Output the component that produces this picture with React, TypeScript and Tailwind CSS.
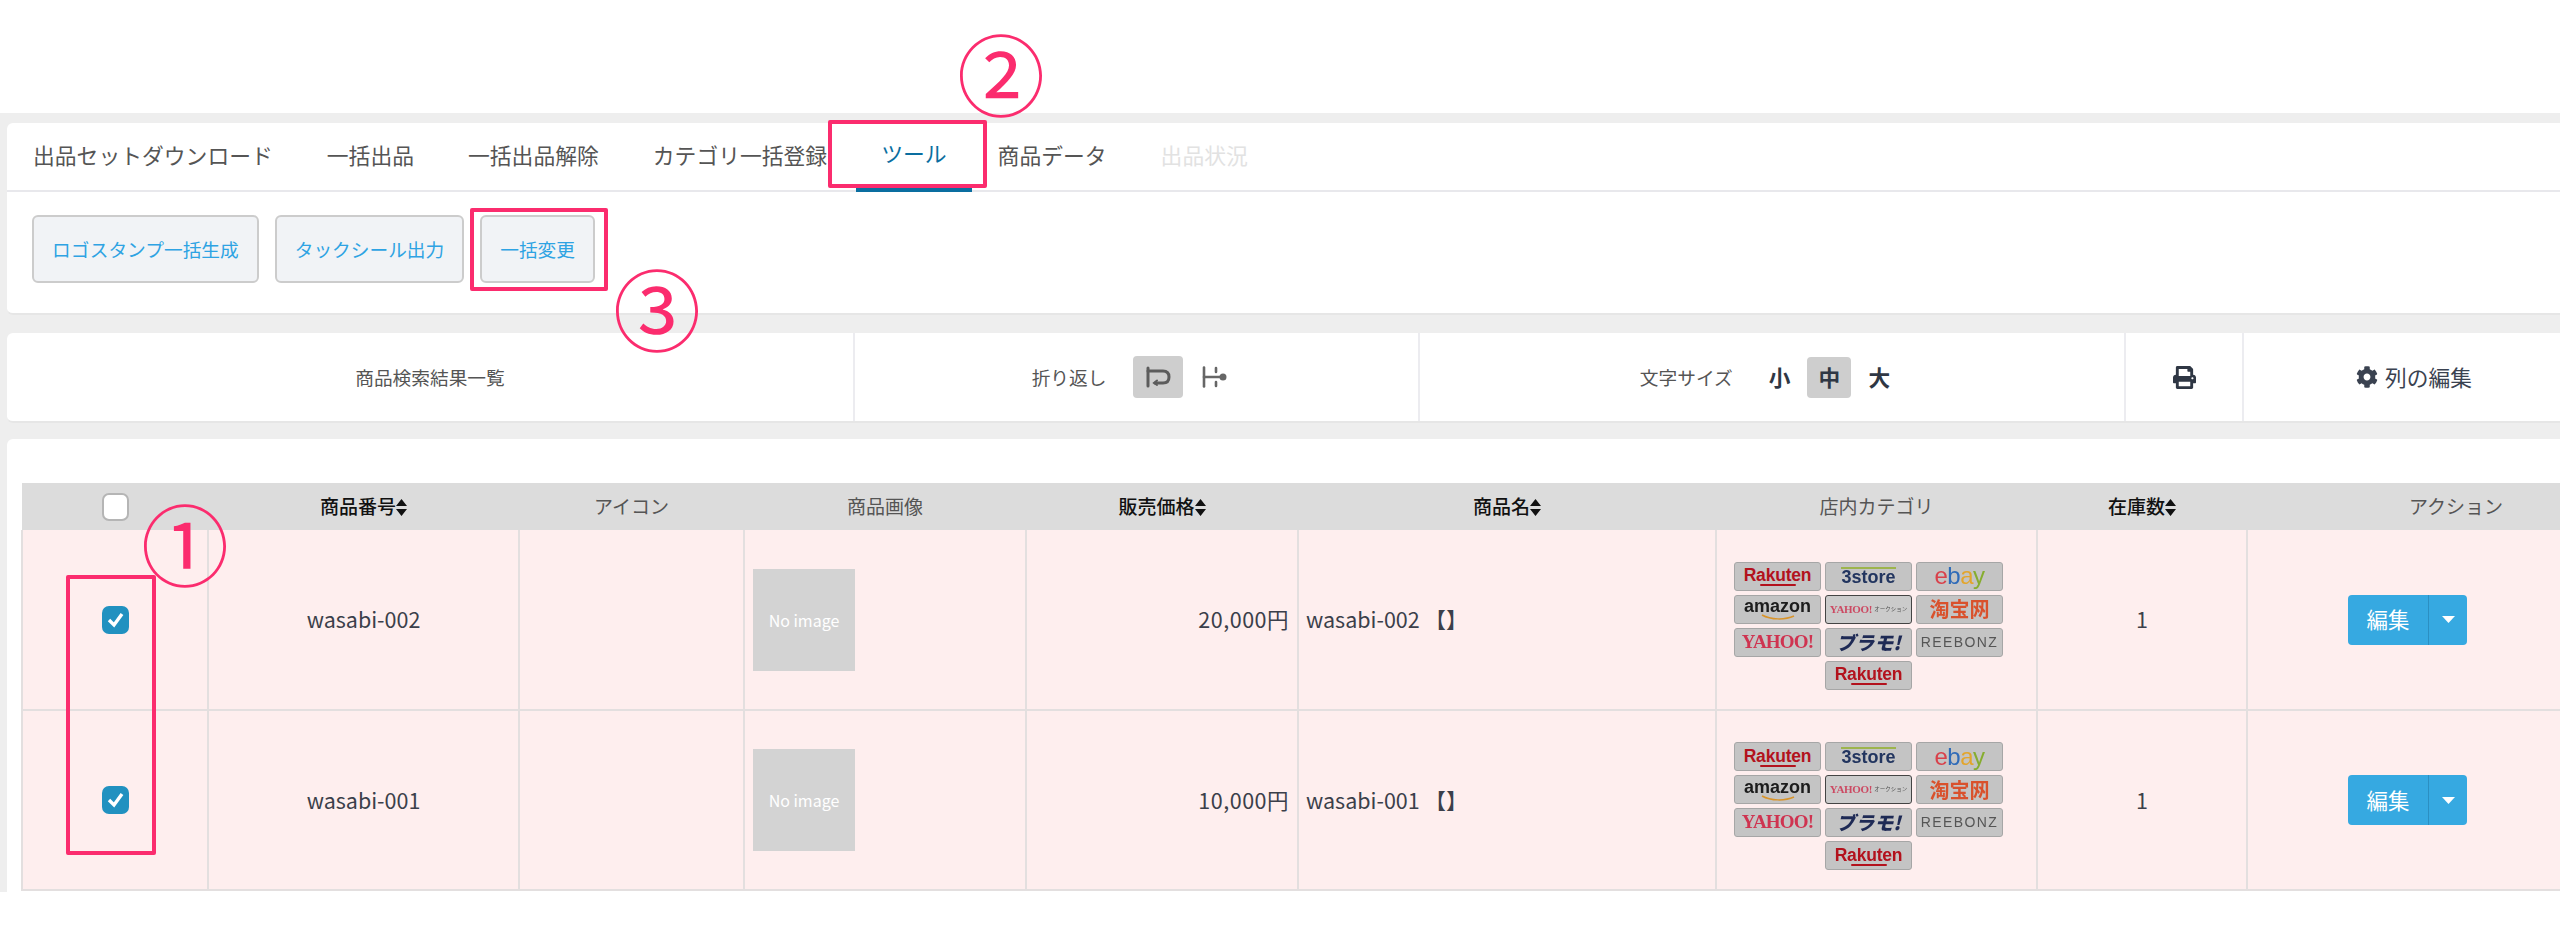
import type { ReactNode } from 'react';
import { FaCog, FaPrint } from 'react-icons/fa';

const FONT = "font-['Noto_Sans_CJK_JP','Noto_Sans',sans-serif]";

function SortIcon() {
  return (
    <svg width="11" height="17" viewBox="0 0 11 17" className="inline-block align-[-2px]">
      <path d="M5.5 0 L11 7 H0 Z M0 10 H11 L5.5 17 Z" fill="#111" />
    </svg>
  );
}

function WrapIcon() {
  return (
    <svg width="25" height="22" viewBox="0 0 25 22" fill="none" stroke="#5c5c5c" strokeWidth="3" strokeLinecap="round">
      <path d="M2 2 V20" />
      <path d="M2 5 H17 C21 5 23 7 23 11 C23 15 21 17 17 17 H9" />
      <path d="M11 14.5 L8 17 L11 19" strokeWidth="2" />
    </svg>
  );
}

function NoWrapIcon() {
  return (
    <svg width="25" height="22" viewBox="0 0 25 22" fill="none" stroke="#666" strokeWidth="2.6" strokeLinecap="round">
      <path d="M2 1.5 V20.5" />
      <path d="M2 11 H21" />
      <path d="M14 2 V6 M14 16 V20" />
      <circle cx="21" cy="11" r="2.2" fill="#666" />
    </svg>
  );
}

function Chip({ children, active = false }: { children: ReactNode; active?: boolean }) {
  return (
    <div
      className={`flex h-[29px] w-[87px] items-center justify-center overflow-hidden whitespace-nowrap rounded-[3px] border font-['Liberation_Sans',sans-serif] ${
        active ? 'border-[#444] bg-[#cbcbcb]' : 'border-[#a6a6a6] bg-[#c4c4c4]'
      }`}
    >
      {children}
    </div>
  );
}

function Rakuten() {
  return (
    <Chip>
      <span className="flex flex-col items-center">
        <span className="text-[17.5px] leading-[18px] font-bold tracking-[-0.2px] text-[#b3121d]">Rakuten</span>
        <span className="h-[2px] w-[36px] rounded-full bg-[#b3121d]" />
      </span>
    </Chip>
  );
}

function MarketChips() {
  return (
    <div className="mt-[12px] ml-[17px] grid w-[269px] grid-cols-[87px_87px_87px] gap-x-[4px] gap-y-[4px] blur-[0.4px]">
      <Rakuten />
      <Chip>
        <span className="border-t-2 border-[#9db44d] text-[18px] leading-[17px] font-bold text-[#22355f]">3store</span>
      </Chip>
      <Chip>
        <span className="text-[24px] leading-none tracking-[-0.5px]">
          <span className="text-[#d9404a]">e</span>
          <span className="text-[#2f6bb8]">b</span>
          <span className="text-[#e3a52c]">a</span>
          <span className="text-[#86ad2f]">y</span>
        </span>
      </Chip>
      <Chip>
        <span className="flex flex-col items-center">
          <span className="text-[18px] leading-[16px] font-bold text-[#1c1c1c]">amazon</span>
          <svg width="34" height="6" viewBox="0 0 34 6" fill="none" stroke="#d9942a" strokeWidth="1.5">
            <path d="M1 1 C10 6 24 6 33 2" />
          </svg>
        </span>
      </Chip>
      <Chip active>
        <span className="font-['Liberation_Serif',serif] text-[11px] font-bold tracking-[-0.3px] text-[#cc4a63]">YAHOO!</span>
        <span className={`${FONT} ml-[2px] text-[5.5px] text-[#555]`}>オークション</span>
      </Chip>
      <Chip>
        <span className={`${FONT} text-[20px] font-bold text-[#d9512c]`}>淘宝网</span>
      </Chip>
      <Chip>
        <span className="font-['Liberation_Serif',serif] text-[19px] font-bold tracking-[-0.8px] text-[#cf3350]">YAHOO!</span>
      </Chip>
      <Chip>
        <span className={`${FONT} text-[19px] font-black text-[#1e2a55] italic`}>ブラモ!</span>
      </Chip>
      <Chip>
        <span className="text-[14px] tracking-[1.4px] text-[#555]">REEBONZ</span>
      </Chip>
      <div />
      <Rakuten />
    </div>
  );
}

function Checkbox({ checked = false }: { checked?: boolean }) {
  if (!checked) {
    return <div className="mx-auto h-[28px] w-[27px] rounded-[7px] border-2 border-[#b5b5b5] bg-white" />;
  }
  return (
    <div className="mx-auto flex h-[28px] w-[27px] items-center justify-center rounded-[7px] bg-[#2191c0]">
      <svg width="17" height="16" viewBox="0 0 17 16" fill="none" stroke="#fff" strokeWidth="3.4">
        <path d="M2 8 L7 13 L15 2" />
      </svg>
    </div>
  );
}

function HeadCell({ label, sort = false }: { label: string; sort?: boolean }) {
  return (
    <th className={`text-center text-[19px] ${sort ? 'font-medium text-[#111]' : 'font-normal text-[#555]'}`}>
      {label}
      {sort && <SortIcon />}
    </th>
  );
}

const rows = [
  { code: 'wasabi-002', price: '20,000円' },
  { code: 'wasabi-001', price: '10,000円' },
];

const cell = 'border-r-2 border-b-2 border-[#e3dfdf] align-middle';

function Annotation({ className, children }: { className: string; children: ReactNode }) {
  return <div className={`pointer-events-none absolute ${className}`}>{children}</div>;
}

function Digit({ className, children }: { className: string; children: string }) {
  return (
    <Annotation
      className={`${className} flex h-[77px] w-[76px] items-center justify-center ${FONT} text-[88px] leading-none text-[#fb2c6e]`}
    >
      {children}
    </Annotation>
  );
}

export default function App() {
  const tabs = ['出品セットダウンロード', '一括出品', '一括出品解除', 'カテゴリ一括登録', 'ツール', '商品データ', '出品状況'];
  const tools = ['ロゴスタンプ一括生成', 'タックシール出力', '一括変更'];

  return (
    <div className={`relative h-[925px] w-full overflow-hidden bg-white ${FONT}`}>
      <div className="mt-[113px] flex h-[779px] flex-col items-stretch bg-[#eeeeee] pt-[10px] pl-[7px]">
        {/* tabs + tool buttons */}
        <section className="h-[192px] w-[2600px] shrink-0 rounded-l-[6px] border-b-2 border-[#e6e6e6] bg-white">
          <div className="flex h-[69px] items-stretch border-b-2 border-[#e8e8ec] pl-[-1px]">
            {tabs.map((t, i) => (
              <div
                key={t}
                className={`-mb-[2px] flex items-center pb-[5px] text-[21.8px] ${
                  i === 4
                    ? 'mr-[-1px] ml-[2px] border-b-4 border-[#0a6ea0] px-[25px] pt-[1px] text-[#0a6ea0]'
                    : i === 6
                      ? 'px-[27px] text-[#e2e2e2]'
                      : i === 0
                        ? 'pr-[27px] pl-[26px] text-[#555]'
                        : 'px-[27px] text-[#555]'
                }`}
              >
                {t}
              </div>
            ))}
          </div>
          <div className="flex gap-[16px] pt-[23px] pl-[25px]">
            {tools.map((t) => (
              <button
                key={t}
                className="flex h-[68px] items-center rounded-[6px] border-2 border-[#cccccc] bg-[#f1f3f6] px-[18px] text-[18.7px] whitespace-nowrap text-[#2ea3e3]"
              >
                {t}
              </button>
            ))}
          </div>
        </section>

        {/* list toolbar */}
        <section className="mt-[18px] flex h-[90px] w-[2600px] shrink-0 rounded-l-[6px] border-b-2 border-[#e6e6e6] bg-white text-[18.7px] text-[#555]">
          <div className="flex w-[848px] items-center justify-center border-r-2 border-[#ececf0]">商品検索結果一覧</div>
          <div className="flex w-[565px] items-center justify-center gap-[27px] border-r-2 border-[#ececf0] pr-[14px]">
            <span>折り返し</span>
            <div className="flex items-center gap-[19px]">
              <div className="flex h-[42px] w-[50px] items-center justify-center rounded-[4px] bg-[#cecece]">
                <WrapIcon />
              </div>
              <NoWrapIcon />
            </div>
          </div>
          <div className="flex w-[706px] items-center justify-center gap-[36px] border-r-2 border-[#ececf0] pr-[14px]">
            <span>文字サイズ</span>
            <div className="flex items-center gap-[17px] text-[21.7px] font-bold text-[#2f3744]">
              <span>小</span>
              <span className="flex h-[41px] w-[44px] items-center justify-center rounded-[4px] bg-[#cecece]">中</span>
              <span>大</span>
            </div>
          </div>
          <div className="flex w-[118px] items-center justify-center border-r-2 border-[#ececf0] text-[#2f3744]">
            <FaPrint size={23} />
          </div>
          <div className="flex w-[340px] items-center justify-center gap-[7px] text-[21.7px] text-[#3a4250]">
            <FaCog size={22} />
            <span>列の編集</span>
          </div>
        </section>

        {/* result table */}
        <section className="mt-[16px] min-h-0 w-[2700px] flex-1 rounded-tl-[6px] bg-white pt-[44px] pl-[14px]">
          <table className="w-[2643px] table-fixed border-collapse">
            <colgroup>
              {[186, 311, 225, 282, 272, 418, 321, 210, 418].map((w, i) => (
                <col key={i} style={{ width: w }} />
              ))}
            </colgroup>
            <thead>
              <tr className="h-[47px] bg-[#dcdcdc]">
                <th>
                  <Checkbox />
                </th>
                <HeadCell label="商品番号" sort />
                <HeadCell label="アイコン" />
                <HeadCell label="商品画像" />
                <HeadCell label="販売価格" sort />
                <HeadCell label="商品名" sort />
                <HeadCell label="店内カテゴリ" />
                <HeadCell label="在庫数" sort />
                <HeadCell label="アクション" />
              </tr>
            </thead>
            <tbody className="text-[21.5px] text-[#3b3f4a]">
              {rows.map((r) => (
                <tr key={r.code} className="h-[180px] bg-[#feeeee]">
                  <td className={`${cell} border-l-2`}>
                    <Checkbox checked />
                  </td>
                  <td className={`${cell} text-center`}>{r.code}</td>
                  <td className={cell} />
                  <td className={cell}>
                    <div className="ml-[8px] flex h-[102px] w-[102px] items-center justify-center bg-[#d3d3d3] text-[16px] text-white">
                      No image
                    </div>
                  </td>
                  <td className={`${cell} pr-[8px] text-right tracking-[0.5px]`}>{r.price}</td>
                  <td className={`${cell} pl-[7px]`}>{r.code} 【】</td>
                  <td className={cell}>
                    <MarketChips />
                  </td>
                  <td className={`${cell} text-center`}>1</td>
                  <td className={`${cell} pr-[97px]`}>
                    <div className="mx-auto flex h-[50px] w-[119px] overflow-hidden rounded-[4px] bg-[#36a9e1] text-[21.5px] text-white">
                      <span className="flex w-[81px] items-center justify-center border-r border-[#2b8fc2]">編集</span>
                      <span className="flex flex-1 items-center justify-center">
                        <svg width="13" height="7" viewBox="0 0 13 7">
                          <path d="M0 0 H13 L6.5 7 Z" fill="#fff" />
                        </svg>
                      </span>
                    </div>
                  </td>
                </tr>
              ))}
            </tbody>
          </table>
        </section>
      </div>

      {/* red review marks drawn over the screen */}
      <Annotation className="top-[120px] left-[828px] h-[68px] w-[159px] rounded-[2px] border-[4px] border-[#fb2c6e]">{null}</Annotation>
      <Annotation className="top-[208px] left-[470px] h-[83px] w-[138px] rounded-[2px] border-[4px] border-[#fb2c6e]">{null}</Annotation>
      <Annotation className="top-[575px] left-[66px] h-[280px] w-[90px] rounded-[2px] border-[4px] border-[#fb2c6e]">{null}</Annotation>
      <Digit className="top-[502px] left-[147px]">①</Digit>
      <Digit className="top-[32px] left-[963px]">②</Digit>
      <Digit className="top-[267px] left-[619px]">③</Digit>
    </div>
  );
}
